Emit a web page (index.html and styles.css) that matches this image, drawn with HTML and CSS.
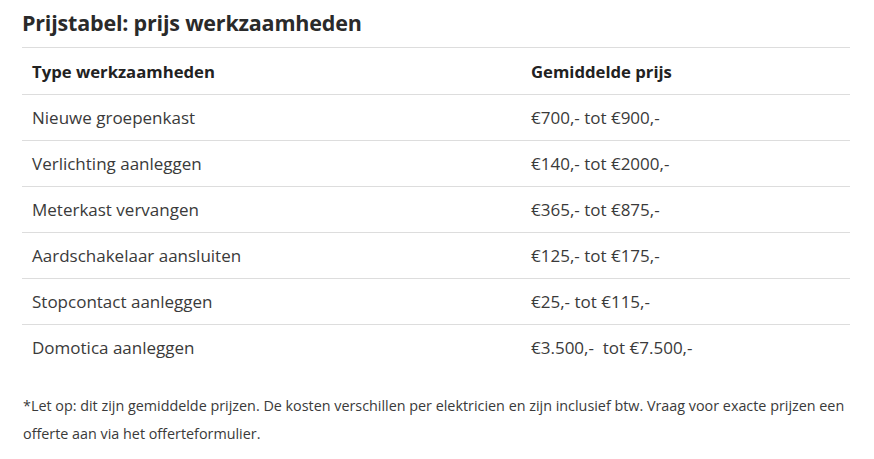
FILE: index.html
```html
<!DOCTYPE html>
<html lang="nl">
<head>
<meta charset="utf-8">
<title>Prijstabel</title>
<link rel="stylesheet" href="styles.css">
</head>
<body>
<div class="page">
  <h2 class="title">Prijstabel: prijs werkzaamheden</h2>
  <table class="prices">
    <thead>
      <tr><th class="c1">Type werkzaamheden</th><th>Gemiddelde prijs</th></tr>
    </thead>
    <tbody>
      <tr><td class="c1">Nieuwe groepenkast</td><td>€700,- tot €900,-</td></tr>
      <tr><td class="c1">Verlichting aanleggen</td><td>€140,- tot €2000,-</td></tr>
      <tr><td class="c1">Meterkast vervangen</td><td>€365,- tot €875,-</td></tr>
      <tr><td class="c1">Aardschakelaar aansluiten</td><td>€125,- tot €175,-</td></tr>
      <tr><td class="c1">Stopcontact aanleggen</td><td>€25,- tot €115,-</td></tr>
      <tr><td class="c1">Domotica aanleggen</td><td>€3.500,-&nbsp; tot €7.500,-</td></tr>
    </tbody>
  </table>
  <p class="note">*Let op: dit zijn gemiddelde prijzen. De kosten verschillen per elektricien en zijn inclusief btw. Vraag voor exacte prijzen een offerte aan via het offerteformulier.</p>
</div>
</body>
</html>
```
FILE: styles.css
```css
html, body {
  margin: 0;
  padding: 0;
  background: #ffffff;
}
.page {
  width: 828px;
  padding: 0 0 0 22px;
  font-family: "Open Sans", "Noto Sans", sans-serif;
  color: #3a3a3a;
}
.title {
  margin: 0;
  padding-top: 9px;
  height: 47px;
  box-sizing: border-box;
  font-family: "Open Sans", sans-serif;
  font-weight: 700;
  font-size: 21.5px;
  line-height: 28px;
  color: #2a2a2a;
  letter-spacing: -0.2px;
}
.prices {
  width: 828px;
  border-collapse: collapse;
  border-top: 1px solid #dddddd;
}
.prices th, .prices td {
  text-align: left;
  padding: 0 0 0 10px;
  border-bottom: 1px solid #dddddd;
}
.prices th {
  height: 46px;
  font-size: 16.7px;
  font-weight: 700;
  color: #222222;
}
.prices td {
  height: 45px;
  font-size: 17px;
  color: #3a3a3a;
}
.prices tbody tr:last-child td {
  border-bottom: none;
}
.prices .c1 {
  width: 489px;
}
.note {
  margin: 22px 0 0 1px;
  font-size: 14.35px;
  line-height: 28px;
  color: #3a3a3a;
}
```
